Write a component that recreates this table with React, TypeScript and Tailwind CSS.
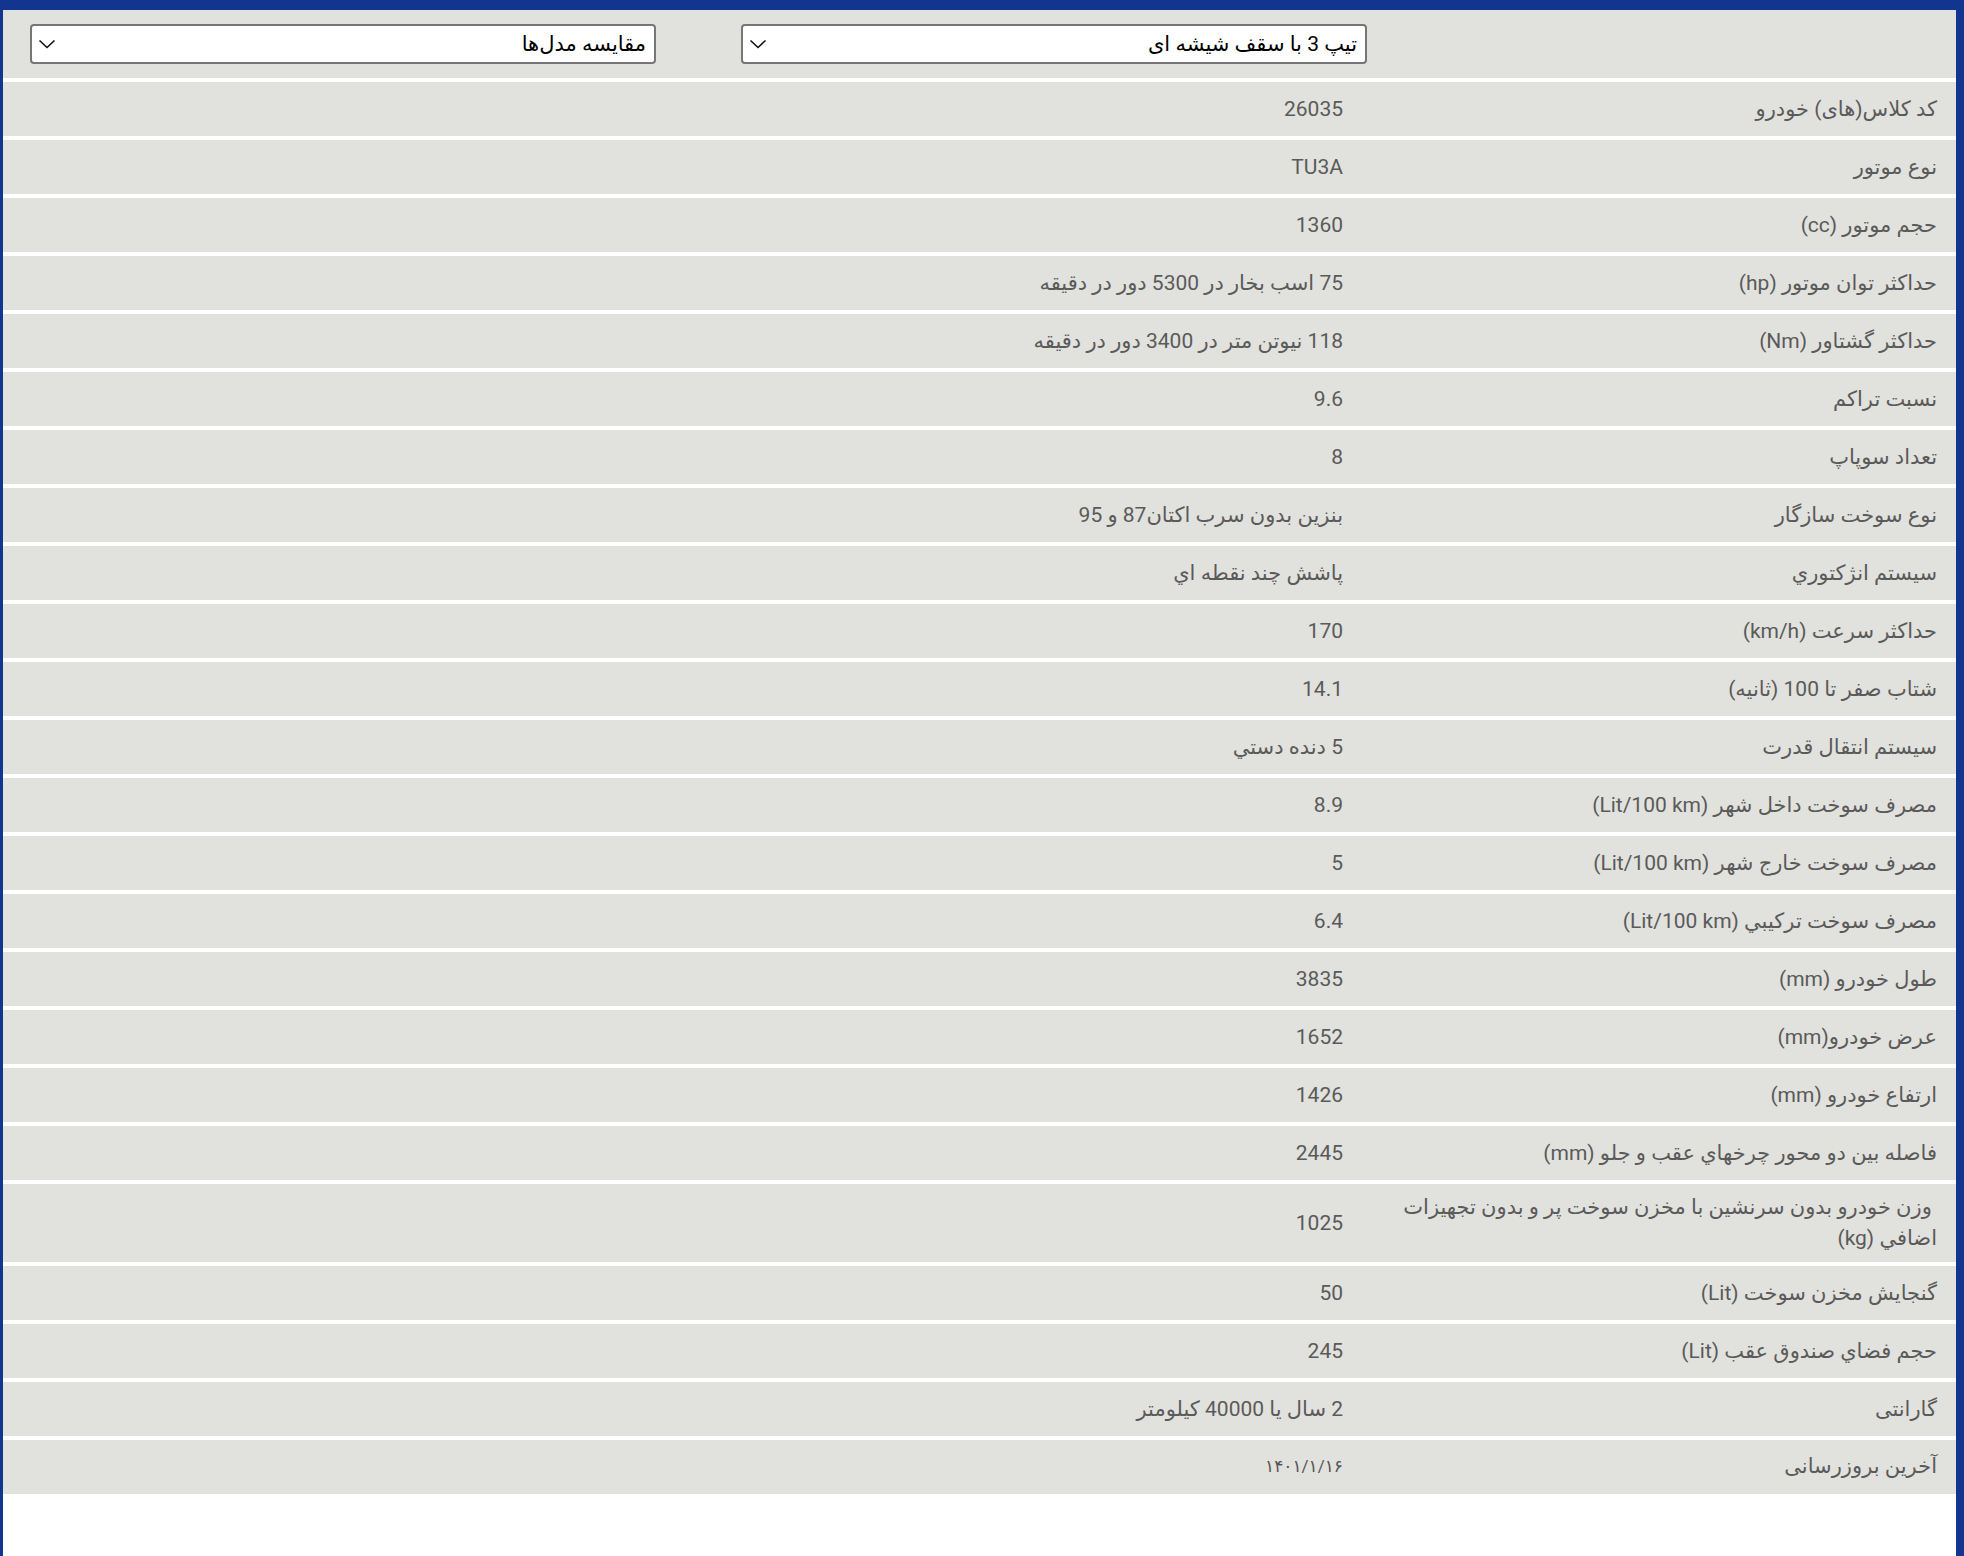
import React from "react";

const rows: [string, string][] = [
  ["کد کلاس(های) خودرو", "26035"],
  ["نوع موتور", "TU3A"],
  ["حجم موتور (cc)", "1360"],
  ["حداکثر توان موتور (hp)", "75 اسب بخار در 5300 دور در دقیقه"],
  ["حداکثر گشتاور (Nm)", "118 نیوتن متر در 3400 دور در دقیقه"],
  ["نسبت تراکم", "9.6"],
  ["تعداد سوپاپ", "8"],
  ["نوع سوخت سازگار", "بنزین بدون سرب اکتان87 و 95"],
  ["سيستم انژکتوري", "پاشش چند نقطه اي"],
  ["حداکثر سرعت (km/h)", "170"],
  ["شتاب صفر تا 100 (ثانیه)", "14.1"],
  ["سيستم انتقال قدرت", "5 دنده دستي"],
  ["مصرف سوخت داخل شهر (Lit/100 km)", "8.9"],
  ["مصرف سوخت خارج شهر (Lit/100 km)", "5"],
  ["مصرف سوخت ترکيبي (Lit/100 km)", "6.4"],
  ["طول خودرو (mm)", "3835"],
  ["عرض خودرو(mm)", "1652"],
  ["ارتفاع خودرو (mm)", "1426"],
  ["فاصله بين دو محور چرخهاي عقب و جلو (mm)", "2445"],
  ["__weight__", "1025"],
  ["گنجايش مخزن سوخت (Lit)", "50"],
  ["حجم فضاي صندوق عقب (Lit)", "245"],
  ["گارانتی", "2 سال یا 40000 کیلومتر"],
];

function Chevron() {
  return (
    <svg width="18" height="10" viewBox="0 0 18 10" fill="none">
      <path d="M1.5 1.5 L9 8.5 L16.5 1.5" stroke="#111" strokeWidth="1.6" />
    </svg>
  );
}

function Select({ label }: { label: string }) {
  return (
    <div className="w-[626px] h-[40px] bg-white border-2 border-[#767676] rounded-[4px] flex items-center justify-between pr-[8px] pl-[6px]">
      <span className="text-[21px] text-black leading-none">{label}</span>
      <Chevron />
    </div>
  );
}

export default function App() {
  return (
    <div
      dir="rtl"
      className="h-[1556px] w-full bg-white border-t-[10px] border-l-[3px] border-r-[8px] border-[#12358f] overflow-hidden"
      style={{ fontFamily: "Roboto, 'DejaVu Sans', sans-serif" }}
    >
      <div className="h-[68px] bg-[#e1e1dd] flex items-center">
        <div className="w-[589px] shrink-0" />
        <Select label="تیپ 3 با سقف شیشه ای" />
        <div className="w-[85px] shrink-0" />
        <Select label="مقایسه مدل‌ها" />
      </div>
      {rows.map(([label, value], i) => (
        <div key={i} className="mt-[4px] min-h-[54px] bg-[#e1e1dd] flex items-center text-[21px] text-[#5a5a5a] leading-[31px] py-[8px]">
          <div className="w-[593px] shrink-0 pr-[19px] pl-[10px]">
            {label === "__weight__" ? (
              <>
                <span className="block">&nbsp;وزن خودرو بدون سرنشین با مخزن سوخت پر و بدون تجهیزات</span>
                <span className="block">اضافي (kg)</span>
              </>
            ) : (
              label
            )}
          </div>
          <div className="pr-[20px]">{value}</div>
        </div>
      ))}
      <div className="mt-[4px] h-[54px] bg-[#e1e1dd] flex items-center text-[21px] text-[#5a5a5a]">
        <div className="w-[593px] shrink-0 pr-[19px]">آخرین بروزرسانی</div>
        <div className="pr-[20px] text-[17px] text-[#555]">۱۴۰۱/۱/۱۶</div>
      </div>
    </div>
  );
}
